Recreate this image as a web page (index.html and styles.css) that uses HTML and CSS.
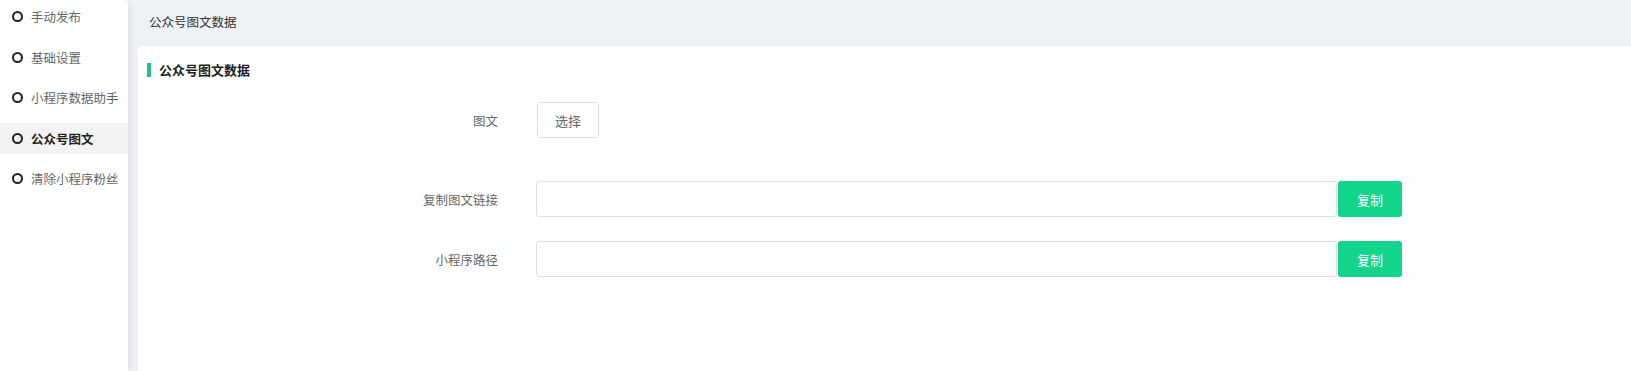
FILE: index.html
```html
<!DOCTYPE html>
<html lang="zh">
<head>
<meta charset="utf-8">
<title>公众号图文数据</title>
<link rel="stylesheet" href="styles.css">
</head>
<body>
<div class="layout">
  <ul class="sideMenu">
    <li><span class="dot"></span>手动发布</li>
    <li><span class="dot"></span>基础设置</li>
    <li><span class="dot"></span>小程序数据助手</li>
    <li class="active"><span class="dot"></span>公众号图文</li>
    <li><span class="dot"></span>清除小程序粉丝</li>
  </ul>

  <div class="main">
    <div class="crumb">公众号图文数据</div>

    <div class="card">
      <h3 class="cardTitle">公众号图文数据</h3>

      <form class="dataForm">
        <div class="row first">
          <label class="rowLabel">图文</label>
          <button type="button" class="btnPlain">选择</button>
        </div>
        <div class="row">
          <label class="rowLabel" for="link">复制图文链接</label>
          <input type="text" id="link" class="textBox">
          <button type="button" class="btnGreen">复制</button>
        </div>
        <div class="row">
          <label class="rowLabel" for="path">小程序路径</label>
          <input type="text" id="path" class="textBox">
          <button type="button" class="btnGreen">复制</button>
        </div>
      </form>
    </div>
  </div>
</div>
</body>
</html>
```

FILE: styles.css
```css
html, body {
  margin: 0;
  height: 100%;
  font-family: "Noto Sans CJK SC", "Noto Sans", sans-serif;
  font-size: 13px;
  color: #333;
}

.layout {
  display: flex;
  height: 100%;
}

/* left menu */
.sideMenu {
  list-style-type: none;
  margin: 0;
  padding: 1px 0 0 0;
  width: 128px;
  flex-shrink: 0;
  background-color: #fff;
  border-top-right-radius: 6px;
  box-shadow: 2px 0 6px rgba(0, 0, 0, 0.07);
  position: relative;
  z-index: 1;
  font-size: 12.5px;
}

.sideMenu li {
  display: flex;
  align-items: center;
  height: 31px;
  margin-bottom: 9.5px;
  padding-left: 12px;
  color: #666;
  white-space: nowrap;
}

.sideMenu li.active {
  background-color: #f3f3f3;
  color: #222;
  font-weight: bold;
}

.dot {
  width: 7px;
  height: 7px;
  border: 2px solid #222;
  border-radius: 50%;
  margin-right: 8px;
  flex-shrink: 0;
}

/* right side */
.main {
  flex: 1;
  background-color: #eef1f5;
  padding-left: 10px;
  display: flex;
  flex-direction: column;
}

.crumb {
  height: 46px;
  line-height: 44px;
  padding-left: 11px;
  color: #333;
  font-size: 12.5px;
}

.card {
  flex: 1;
  background-color: #fff;
  border-top-left-radius: 4px;
  padding-top: 17px;
}

.cardTitle {
  margin: 0 0 25px 9px;
  padding-left: 8px;
  border-left: 4px solid #1fbf95;
  font-size: 13px;
  line-height: 14px;
  height: 14px;
  color: #222;
}

.row {
  display: flex;
  align-items: center;
  margin-bottom: 24px;
}

.row.first {
  margin-bottom: 43px;
}

.rowLabel {
  width: 360px;
  padding-right: 39px;
  text-align: right;
  color: #666;
  font-size: 12.5px;
  flex-shrink: 0;
}

.btnPlain {
  width: 62px;
  height: 36px;
  background-color: #fff;
  border: 1px solid #dcdfe6;
  border-radius: 3px;
  color: #666;
  font-family: inherit;
  font-size: 13px;
  padding: 0;
}

.textBox {
  box-sizing: border-box;
  width: 801px;
  height: 36px;
  margin-left: -1px;
  border: 1px solid #dcdfe6;
  border-radius: 3px;
  padding: 0 10px;
  font-family: inherit;
  font-size: 13px;
  outline: none;
}

.btnGreen {
  width: 64px;
  height: 36px;
  margin-left: 1px;
  background-color: #12d48b;
  border: none;
  border-radius: 3px;
  color: #fff;
  font-family: inherit;
  font-size: 13px;
  padding: 0;
}
```
